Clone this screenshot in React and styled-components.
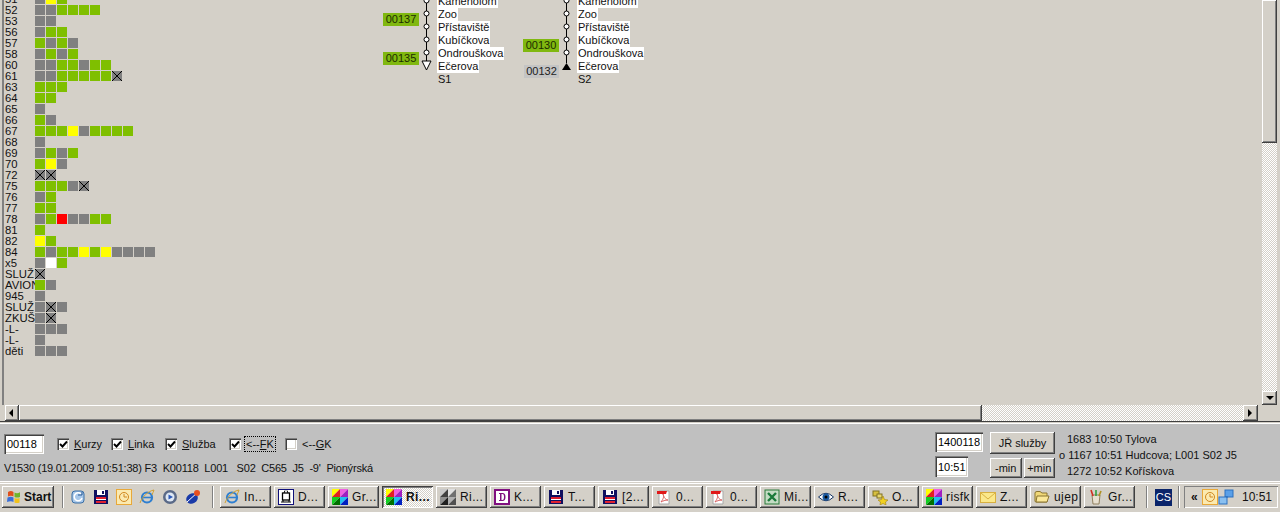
import React from 'react'
import styled, { createGlobalStyle, css } from 'styled-components'

const GlobalStyle = createGlobalStyle`
    html, body {
        margin: 0;
        padding: 0;
        background: #d4d0c8;
        overflow: hidden;
    }
    * {
        box-sizing: border-box;
    }
`

const raised = css`
    background-color: #d4d0c8;
    box-shadow: inset -1px -1px #404040, inset 1px 1px #fff, inset -2px -2px #808080;
`

const sunken = css`
    background-color: #fff;
    box-shadow: inset 1px 1px #808080, inset 2px 2px #404040, inset -1px -1px #fff, inset -2px -2px #d4d0c8;
`

const dither = css`
    background: repeating-conic-gradient(#fff 0 25%, #d4d0c8 0 50%) 0 0 / 2px 2px;
`

const Page = styled.div`
    width: 1280px;
    height: 512px;
    display: flex;
    flex-direction: column;
    overflow: hidden;
    background: #d4d0c8;
    color: #111;
    font: 11px 'Liberation Sans', Arial, sans-serif;
`

/* main window */
const Frame = styled.div`
    height: 421px;
    flex: none;
    display: flex;
    flex-direction: column;
    padding: 0 3px 0 2px;
`

const ViewRow = styled.div`
    height: 405px;
    flex: none;
    display: flex;
`

const Canvas = styled.div`
    flex: 1;
    min-width: 0;
    overflow: hidden;
    border-left: 2px solid;
    border-image: linear-gradient(to right, #808080 50%, #404040 50%) 1;
    display: flex;
    align-items: flex-start;
`

const VScroll = styled.div`
    width: 15px;
    margin-left: 2px;
    flex: none;
    display: flex;
    flex-direction: column;
`

const VThumb = styled.div`
    ${raised}
    height: 143px;
    flex: none;
`

const Track = styled.div`
    ${dither}
    flex: 1;
    min-width: 0;
`

const ArrowButton = styled.div`
    ${raised}
    flex: none;
    width: ${(p) => p.$w}px;
    height: ${(p) => p.$h}px;
    display: flex;
    align-items: center;
    justify-content: center;
`

const HScroll = styled.div`
    height: 16px;
    flex: none;
    display: flex;
    padding-left: 3px;
    padding-right: 2px;
`

const HThumb = styled.div`
    ${raised}
    width: 963px;
    flex: none;
`

const Corner = styled.div`
    width: 15px;
    margin-left: 2px;
    flex: none;
`

/* grid of courses */
const GridList = styled.div`
    width: 379px;
    flex: none;
    margin-top: -6px;
    display: flex;
    flex-direction: column;
`

const GridRow = styled.div`
    height: 11px;
    display: flex;
    align-items: flex-start;
`

const RowLabel = styled.div`
    width: 31px;
    flex: none;
    padding-left: 1px;
    font-size: 11.3px;
    line-height: 11px;
    white-space: nowrap;
`

const cellColors = {
    g: '#808080',
    n: '#7fbf00',
    y: '#ffff00',
    r: '#ff0000',
    w: '#ffffff',
    x: '#808080',
}

const Cell = styled.div`
    position: relative;
    width: 10px;
    height: 10px;
    margin-right: 1px;
    flex: none;
    background-color: ${(p) => cellColors[p.$kind]};
    ${(p) =>
        p.$kind === 'x' &&
        css`
            background-image: linear-gradient(45deg, transparent 46%, #000 46%, #000 54%, transparent 54%),
                linear-gradient(-45deg, transparent 46%, #000 46%, #000 54%, transparent 54%);
        `}
`

/* line diagrams */
const Diagrams = styled.div`
    display: flex;
    margin-top: -6px;
`

const Diagram = styled.div`
    width: 140px;
    flex: none;
    display: flex;
    align-items: flex-start;
`

const BadgeColumn = styled.div`
    width: 36px;
    flex: none;
    padding-top: 6px;
    display: flex;
    flex-direction: column;
`

const BadgeSlot = styled.div`
    height: 13px;
    display: flex;
    justify-content: flex-end;
`

const Badge = styled.div`
    width: ${(p) => (p.$gray ? 35 : 36)}px;
    height: 13px;
    line-height: 13px;
    text-align: center;
    color: ${(p) => (p.$gray ? '#222' : '#1c2c00')};
    background: ${(p) => (p.$gray ? '#c4c4c4' : '#80b810')};
`

const LineSvg = styled.svg`
    width: 14px;
    height: 80px;
    flex: none;
    margin: 1px 3px 0 1px;
    display: block;
`

const StopColumn = styled.div`
    padding-top: 1px;
    display: flex;
    flex-direction: column;
    align-items: flex-start;
`

const StopLabel = styled.div`
    height: 13px;
    line-height: 12px;
    padding: 0 1px;
    white-space: nowrap;
    background: ${(p) => (p.$plain ? 'transparent' : '#fff')};
`

/* bottom panel */
const Panel = styled.div`
    height: 61px;
    flex: none;
    display: flex;
    justify-content: space-between;
    background: #c0c0c0;
    border-top: 1px solid #404040;
    box-shadow: inset 0 1px #d4d0c8, inset 0 2px #fff, inset 0 -1px #fff;
    padding-left: 4px;
`

const PanelLeft = styled.div`
    padding-top: 12px;
    display: flex;
    flex-direction: column;
`

const CheckRow = styled.div`
    display: flex;
    align-items: center;
`

const Field = styled.input`
    ${sunken}
    width: ${(p) => p.$w}px;
    height: ${(p) => p.$h}px;
    border: 0;
    outline: 0;
    padding: 0 0 0 3px;
    font: 11px 'Liberation Sans', Arial, sans-serif;
    color: #000;
    display: block;
`

const CheckGroup = styled.div`
    width: ${(p) => p.$w}px;
    flex: none;
    display: flex;
    align-items: center;
    ${(p) => p.$first && 'margin-left: 13px;'}
`

const Box = styled.div`
    ${sunken}
    width: 12px;
    height: 12px;
    flex: none;
    margin-right: 5px;
    display: flex;
    align-items: center;
    justify-content: center;
`

const CheckText = styled.span`
    padding: 1px 1px;
    margin-left: -1px;
    outline: ${(p) => (p.$focus ? '1px dotted #000' : 'none')};
    u {
        text-decoration: underline;
    }
`

const StatusLine = styled.div`
    margin-top: 7px;
    line-height: 14px;
    letter-spacing: -0.2px;
    white-space: pre;
`

const PanelRight = styled.div`
    width: 345px;
    flex: none;
    padding-top: 10px;
    display: flex;
    align-items: flex-start;
`

const FieldColumn = styled.div`
    width: 55px;
    flex: none;
    display: flex;
    flex-direction: column;
    gap: 4px;
`

const ButtonColumn = styled.div`
    width: 65px;
    flex: none;
    display: flex;
    flex-direction: column;
    gap: 4px;
`

const ButtonRow = styled.div`
    display: flex;
    gap: 2px;
`

const PanelButton = styled.div`
    ${raised}
    flex: 1;
    height: ${(p) => p.$h}px;
    line-height: ${(p) => p.$h}px;
    text-align: center;
    white-space: nowrap;
`

const RouteList = styled.div`
    margin-left: 4px;
    margin-top: -1px;
    line-height: 16px;
    white-space: pre;
`

const RouteLine = styled.div`
    padding-left: ${(p) => (p.$marked ? 0 : 8)}px;
`

/* taskbar */
const Taskbar = styled.div`
    height: 30px;
    flex: none;
    display: flex;
    align-items: center;
    background: #d4d0c8;
    box-shadow: inset 0 1px #d4d0c8, inset 0 2px #fff;
    padding: 0 2px;
    font-size: 12px;
`

const StartButton = styled.div`
    ${raised}
    width: 52px;
    height: 22px;
    flex: none;
    display: flex;
    align-items: center;
    gap: 2px;
    padding-left: 4px;
    font-weight: bold;
    font-size: 12px;
`

const Divider = styled.div`
    width: 2px;
    height: 22px;
    flex: none;
    margin-left: ${(p) => p.$left}px;
    margin-right: ${(p) => p.$right}px;
    background: #fff;
    border-left: 1px solid #808080;
`

const QuickLaunch = styled.div`
    display: flex;
    gap: 7px;
    flex: none;
    width: 142px;
`

const TaskList = styled.div`
    display: flex;
    gap: 3px;
    flex: none;
`

const TaskButton = styled.div`
    ${(p) =>
        p.$active
            ? css`
                  background: repeating-conic-gradient(#fff 0 25%, #d4d0c8 0 50%) 0 0 / 2px 2px;
                  box-shadow: inset 1px 1px #404040, inset -1px -1px #fff, inset 2px 2px #808080;
                  font-weight: bold;
              `
            : raised}
    width: 51px;
    height: 22px;
    flex: none;
    display: flex;
    align-items: center;
    gap: 4px;
    padding-left: 4px;
    white-space: nowrap;
    letter-spacing: 0.4px;
`

const LangBox = styled.div`
    width: 17px;
    height: 17px;
    flex: none;
    background: #0a246a;
    color: #fff;
    text-align: center;
    line-height: 17px;
    font-size: 11px;
`

const Tray = styled.div`
    width: 94px;
    height: 22px;
    flex: none;
    display: flex;
    align-items: center;
    padding-left: 7px;
    box-shadow: inset 1px 1px #808080, inset -1px -1px #fff;
    font-size: 12px;
`

const TrayChevron = styled.span`
    font-weight: bold;
    width: 11px;
    flex: none;
`

const TrayTime = styled.span`
    margin-left: 8px;
`

const TinyIcon = styled.svg`
    width: ${(p) => p.$s || 16}px;
    height: ${(p) => p.$s || 16}px;
    flex: none;
    display: block;
`

const Tri = ({ dir }) => {
    const points = {
        left: '5,0 1,4 5,8',
        right: '1,0 5,4 1,8',
        down: '0,2 8,2 4,6',
    }
    return (
        <TinyIcon $s={8} viewBox='0 0 8 8'>
            <polygon points={points[dir]} fill='#000' />
        </TinyIcon>
    )
}

const Tick = () => (
    <TinyIcon $s={9} viewBox='0 0 9 9'>
        <path d='M1 4 L3.5 6.5 L8 1.5' fill='none' stroke='#000' strokeWidth='1.9' />
    </TinyIcon>
)

const Flag = () => (
    <TinyIcon viewBox='0 0 16 16'>
        <path d='M2 3 Q5 1 7.5 3 V7.5 Q5 6 2 7.5Z' fill='#e0501c' />
        <path d='M8.5 3.4 Q11 5 14 3.2 V8 Q11 9 8.5 8Z' fill='#6fb52c' />
        <path d='M1.5 8.5 Q5 7 7.5 8.5 V13 Q5 11.5 1 13Z' fill='#3a6fd8' />
        <path d='M8.5 9 Q11 10 13.5 9 V13.5 Q11 14.5 8.5 13.5Z' fill='#f2c21a' />
    </TinyIcon>
)

const Palette = ({ gray }) => (
    <TinyIcon viewBox='0 0 16 16'>
        <rect width='16' height='16' fill='#fff' />
        <polygon points='0,0 8,0 0,8' fill={gray ? '#c8c8c8' : '#ff0'} />
        <polygon points='8,0 8,8 0,8' fill={gray ? '#404040' : '#e02020'} />
        <polygon points='8,0 16,0 8,8' fill={gray ? '#e0e0e0' : '#f060e0'} />
        <polygon points='16,0 16,8 8,8' fill={gray ? '#707070' : '#a020c0'} />
        <polygon points='0,8 8,8 0,16' fill={gray ? '#909090' : '#10d020'} />
        <polygon points='8,8 8,16 0,16' fill={gray ? '#202020' : '#007000'} />
        <polygon points='8,8 16,8 8,16' fill={gray ? '#b0b0b0' : '#20c0f0'} />
        <polygon points='16,8 16,16 8,16' fill={gray ? '#505050' : '#0020c0'} />
    </TinyIcon>
)

const Floppy = () => (
    <TinyIcon viewBox='0 0 16 16'>
        <rect x='1' y='1' width='14' height='14' fill='#101060' />
        <rect x='4' y='1' width='8' height='5' fill='#fff' />
        <rect x='9' y='2' width='2' height='3' fill='#101060' />
        <rect x='3' y='8' width='10' height='2' fill='#e02030' />
        <rect x='3' y='10' width='10' height='1' fill='#fff' />
        <rect x='3' y='12' width='10' height='2' fill='#e02030' />
    </TinyIcon>
)

const Clock = () => (
    <TinyIcon viewBox='0 0 16 16'>
        <rect x='0.5' y='0.5' width='15' height='15' fill='#fbeab0' stroke='#e8a838' />
        <circle cx='8' cy='8' r='4.5' fill='none' stroke='#d08820' />
        <path d='M8 5 V8 H11' fill='none' stroke='#d08820' />
    </TinyIcon>
)

const Ie = () => (
    <TinyIcon viewBox='0 0 16 16'>
        <circle cx='8' cy='8.5' r='5' fill='none' stroke='#2f7fd0' strokeWidth='2.2' />
        <path d='M3.5 8.5 H13' stroke='#2f7fd0' strokeWidth='1.6' />
        <path d='M1 14 C3 8 9 2 15 1 C14 3 14 4 13 6' fill='none' stroke='#d0a030' strokeWidth='1' />
    </TinyIcon>
)

const Refresh = () => (
    <TinyIcon viewBox='0 0 16 16'>
        <rect x='2' y='2' width='12' height='12' rx='3' fill='#a8c8ea' stroke='#3a6ea5' />
        <path d='M11 5 A4 4 0 1 0 12 9' fill='none' stroke='#fff' strokeWidth='1.5' />
        <path d='M8 6 H12 V3' fill='none' stroke='#2a5a95' />
    </TinyIcon>
)

const Player = () => (
    <TinyIcon viewBox='0 0 16 16'>
        <circle cx='8' cy='8' r='7' fill='#5a6a88' />
        <circle cx='8' cy='8' r='4.5' fill='#dfe8f4' />
        <polygon points='6.5,5.5 11,8 6.5,10.5' fill='#2a58b8' />
    </TinyIcon>
)

const Rocket = () => (
    <TinyIcon viewBox='0 0 16 16'>
        <ellipse cx='7' cy='9.5' rx='6' ry='5' fill='#1a3aa8' transform='rotate(-30 7 9.5)' />
        <path d='M2 13 L13 3' stroke='#fff' strokeWidth='1' />
        <circle cx='12' cy='4' r='3' fill='#e85020' />
    </TinyIcon>
)

const Train = () => (
    <TinyIcon viewBox='0 0 16 16'>
        <rect x='0.5' y='0.5' width='15' height='15' fill='#fff' stroke='#10107a' />
        <rect x='4.5' y='4' width='7' height='7' fill='none' stroke='#000' strokeWidth='1.3' />
        <path d='M7 1.5 L6 4 M9 1.5 L10 4 M3 13 H13 M5 11 V13 M11 11 V13' stroke='#000' />
    </TinyIcon>
)

const LetterD = () => (
    <TinyIcon viewBox='0 0 16 16'>
        <rect x='1' y='1' width='14' height='14' fill='#fff' stroke='#801080' strokeWidth='2' />
        <path d='M5 4 H8.5 Q11.5 4 11.5 8 Q11.5 12 8.5 12 H5 V11 H6 V5 H5Z M7.5 5 V11 H8.5 Q10 11 10 8 Q10 5 8.5 5Z' fill='#801080' />
    </TinyIcon>
)

const Pdf = () => (
    <TinyIcon viewBox='0 0 16 16'>
        <path d='M3 2 H13 V15 H3Z' fill='#fff' stroke='#a8a8a8' />
        <path d='M1 2 H11 L10 5 H1Z' fill='#e01818' />
        <path d='M5 13 C8 9 8 7 7 5 C8 9 10 11 12 11 C9 11 7 12 5 13Z' fill='none' stroke='#d86060' />
    </TinyIcon>
)

const Excel = () => (
    <TinyIcon viewBox='0 0 16 16'>
        <rect x='1' y='1' width='14' height='14' fill='#c4dcc4' stroke='#2a7a3a' />
        <path d='M4 4 L12 12 M12 4 L4 12' stroke='#1a7a3a' strokeWidth='2.4' />
    </TinyIcon>
)

const Eye = () => (
    <TinyIcon viewBox='0 0 16 16'>
        <path d='M0.5 8 Q8 0.5 15.5 8 Q8 15.5 0.5 8Z' fill='#fff' stroke='#103060' />
        <circle cx='8' cy='8' r='3.5' fill='#1a5aa0' />
        <circle cx='8' cy='8' r='1.5' fill='#000' />
    </TinyIcon>
)

const Keys = () => (
    <TinyIcon viewBox='0 0 16 16'>
        <rect x='1' y='2' width='6' height='5' fill='#d8c040' stroke='#807020' />
        <rect x='5' y='5' width='5' height='4' fill='#e8d870' stroke='#807020' />
        <polygon points='11,7 12.5,10.5 16,11 13.5,13 14,16 11,14.5 8,16 8.5,13 6,11 9.5,10.5' fill='#f0d020' stroke='#a08010' strokeWidth='0.6' />
    </TinyIcon>
)

const Mail = () => (
    <TinyIcon viewBox='0 0 16 16'>
        <rect x='0.5' y='3.5' width='15' height='10' fill='#fbe88a' stroke='#d8b040' />
        <path d='M1 4 L8 10 L15 4' fill='none' stroke='#d8b040' />
    </TinyIcon>
)

const Folder = () => (
    <TinyIcon viewBox='0 0 16 16'>
        <path d='M1 4 Q1 2.5 3 2.5 H6 L8 4 H13 V13 H2 Q1 13 1 12Z' fill='#f0d878' stroke='#8a7430' />
        <path d='M3 7 H15 L13 13 H2Z' fill='#fbe898' stroke='#8a7430' />
    </TinyIcon>
)

const Paint = () => (
    <TinyIcon viewBox='0 0 16 16'>
        <path d='M4 6 H12 L11 15 H5Z' fill='#e8e0d0' stroke='#908060' />
        <path d='M5 7 L3 1' stroke='#d03020' strokeWidth='1.6' />
        <path d='M8 7 V1' stroke='#30a040' strokeWidth='1.6' />
        <path d='M11 7 L13 2' stroke='#b09020' strokeWidth='1.6' />
    </TinyIcon>
)

const Network = () => (
    <TinyIcon viewBox='0 0 16 16'>
        <rect x='7' y='1' width='8' height='7' fill='#5aa0e8' stroke='#2a70c0' />
        <rect x='1' y='8' width='8' height='7' fill='#8ac0f0' stroke='#2a70c0' />
        <path d='M8 8 L10 8' stroke='#2a70c0' />
    </TinyIcon>
)

const gridRows = [
    ['51', 'gyn'],
    ['52', 'ggnnnn'],
    ['53', 'gg'],
    ['56', 'gnn'],
    ['57', 'ngng'],
    ['58', 'gngn'],
    ['60', 'ggnngnn'],
    ['61', 'ggnnnnnx'],
    ['63', 'nnn'],
    ['64', 'nn'],
    ['65', 'g'],
    ['66', 'ng'],
    ['67', 'nnnygnnnn'],
    ['68', 'g'],
    ['69', 'gngn'],
    ['70', 'nyg'],
    ['72', 'xx'],
    ['75', 'nnngx'],
    ['76', 'gn'],
    ['77', 'nn'],
    ['78', 'gnrggnn'],
    ['81', 'n'],
    ['82', 'yn'],
    ['84', 'ngnnynygggg'],
    ['x5', 'gwn'],
    ['SLUŽ', 'x'],
    ['AVION', 'ng'],
    ['945', 'g'],
    ['SLUŽ', 'gxg'],
    ['ZKUŠ', 'gx'],
    ['-L-', 'ggg'],
    ['-L-', 'g'],
    ['děti', 'ggg'],
]

const stops = ['Kamenolom', 'Zoo', 'Přístaviště', 'Kubíčkova', 'Ondrouškova', 'Ečerova']

const diagrams = [
    { name: 'S1', badges: [null, '00137', null, null, '00135'] },
    { name: 'S2', badges: [null, null, null, '00130', null, '00132'], up: true },
]

const checks = [
    { key: 'K', rest: 'urzy', w: 54, on: true },
    { key: 'L', rest: 'inka', w: 54, on: true },
    { key: 'S', rest: 'lužba', w: 64, on: true },
    { pre: '<--', key: 'F', rest: 'K', w: 56, on: true, focus: true },
    { pre: '<--', key: 'G', rest: 'K', w: 50, on: false },
]

const quickIcons = [Refresh, Floppy, Clock, Ie, Player, Rocket]

const tasks = [
    { icon: <Ie />, text: 'In...' },
    { icon: <Train />, text: 'D...' },
    { icon: <Palette />, text: 'Gr...' },
    { icon: <Palette />, text: 'Ri...', active: true },
    { icon: <Palette gray />, text: 'Ri...' },
    { icon: <LetterD />, text: 'K...' },
    { icon: <Floppy />, text: 'T...' },
    { icon: <Floppy />, text: '[2...' },
    { icon: <Pdf />, text: '0...' },
    { icon: <Pdf />, text: '0...' },
    { icon: <Excel />, text: 'Mi...' },
    { icon: <Eye />, text: 'R...' },
    { icon: <Keys />, text: 'O...' },
    { icon: <Palette />, text: 'risfk' },
    { icon: <Mail />, text: 'Z...' },
    { icon: <Folder />, text: 'ujep' },
    { icon: <Paint />, text: 'Gr...' },
]

const LineDrawing = ({ up }) => (
    <LineSvg viewBox='0 0 14 80'>
        <path d={`M6.5 0 V${up ? 68 : 66}`} stroke='#000' fill='none' />
        {[5.5, 18.5, 31.5, 44.5, 57.5].map((y) => (
            <circle key={y} cx='6.5' cy={y} r='2.5' fill='#fff' stroke='#000' />
        ))}
        {up ? (
            <polygon points='2,75 11,75 6.5,68' fill='#000' />
        ) : (
            <polygon points='2,66 11,66 6.5,75' fill='#fff' stroke='#000' />
        )}
    </LineSvg>
)

const App = () => (
    <Page>
        <GlobalStyle />
        <Frame>
            <ViewRow>
                <Canvas>
                    <GridList>
                        {gridRows.map(([label, cells], i) => (
                            <GridRow key={i}>
                                <RowLabel>{label}</RowLabel>
                                {cells.split('').map((kind, j) => (
                                    <Cell key={j} $kind={kind} />
                                ))}
                            </GridRow>
                        ))}
                    </GridList>
                    <Diagrams>
                        {diagrams.map((d) => (
                            <Diagram key={d.name}>
                                <BadgeColumn>
                                    {d.badges.map((b, i) => (
                                        <BadgeSlot key={i}>
                                            {b && <Badge $gray={b === '00132'}>{b}</Badge>}
                                        </BadgeSlot>
                                    ))}
                                </BadgeColumn>
                                <LineDrawing up={d.up} />
                                <StopColumn>
                                    {stops.map((s) => (
                                        <StopLabel key={s}>{s}</StopLabel>
                                    ))}
                                    <StopLabel $plain>{d.name}</StopLabel>
                                </StopColumn>
                            </Diagram>
                        ))}
                    </Diagrams>
                </Canvas>
                <VScroll>
                    <VThumb />
                    <Track />
                    <ArrowButton $w={15} $h={14}>
                        <Tri dir='down' />
                    </ArrowButton>
                </VScroll>
            </ViewRow>
            <HScroll>
                <ArrowButton $w={14} $h={16}>
                    <Tri dir='left' />
                </ArrowButton>
                <HThumb />
                <Track />
                <ArrowButton $w={15} $h={16}>
                    <Tri dir='right' />
                </ArrowButton>
                <Corner />
            </HScroll>
        </Frame>
        <Panel>
            <PanelLeft>
                <CheckRow>
                    <Field readOnly value='00118' $w={40} $h={20} />
                    {checks.map((c, i) => (
                        <CheckGroup key={c.key} $w={c.w} $first={i === 0}>
                            <Box>{c.on && <Tick />}</Box>
                            <CheckText $focus={c.focus}>
                                {c.pre}
                                <u>{c.key}</u>
                                {c.rest}
                            </CheckText>
                        </CheckGroup>
                    ))}
                </CheckRow>
                <StatusLine>
                    {"V1530 (19.01.2009 10:51:38) F3  K00118  L001   S02  C565  J5  -9'  Pionýrská"}
                </StatusLine>
            </PanelLeft>
            <PanelRight>
                <FieldColumn>
                    <Field readOnly value='1400118' $w={48} $h={20} />
                    <Field readOnly value='10:51' $w={33} $h={21} />
                </FieldColumn>
                <ButtonColumn>
                    <PanelButton $h={22}>JŘ služby</PanelButton>
                    <ButtonRow>
                        <PanelButton $h={20}>-min</PanelButton>
                        <PanelButton $h={20}>+min</PanelButton>
                    </ButtonRow>
                </ButtonColumn>
                <RouteList>
                    <RouteLine>1683 10:50 Tylova</RouteLine>
                    <RouteLine $marked>o 1167 10:51 Hudcova; L001 S02 J5</RouteLine>
                    <RouteLine>1272 10:52 Kořískova</RouteLine>
                </RouteList>
            </PanelRight>
        </Panel>
        <Taskbar>
            <StartButton>
                <Flag />
                Start
            </StartButton>
            <Divider $left={8} $right={6} />
            <QuickLaunch>
                {quickIcons.map((Icon, i) => (
                    <Icon key={i} />
                ))}
            </QuickLaunch>
            <Divider $left={0} $right={6} />
            <TaskList>
                {tasks.map((t, i) => (
                    <TaskButton key={i} $active={t.active}>
                        {t.icon}
                        {t.text}
                    </TaskButton>
                ))}
            </TaskList>
            <Divider $left={11} $right={7} />
            <LangBox>CS</LangBox>
            <Divider $left={6} $right={4} />
            <Tray>
                <TrayChevron>«</TrayChevron>
                <Clock />
                <Network />
                <TrayTime>10:51</TrayTime>
            </Tray>
        </Taskbar>
    </Page>
)

export default App
